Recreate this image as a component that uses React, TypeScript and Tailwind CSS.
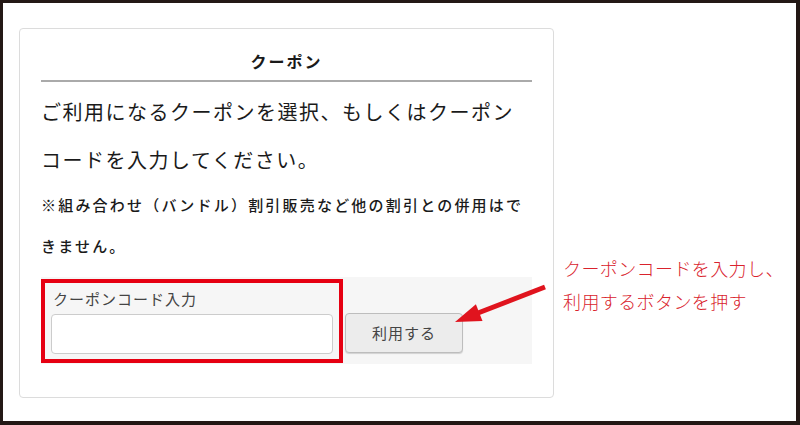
export default function App() {
  return (
    <div
      className="relative w-[800px] h-[425px] bg-white border-t-[3px] border-l-[3px] border-r-4 border-b-4 border-[#231815] flex items-start pl-[16px] pt-[25px] text-[#1a1a1a]"
      style={{ fontFamily: '"Noto Sans CJK JP", "Noto Sans", sans-serif' }}
    >
      {/* クーポン入力カード */}
      <div className="w-[535px] h-[370px] shrink-0 border border-[#dcdcdc] rounded-[4px] px-[21px] pt-[20px]">
        <h2 className="text-center text-[16px] font-bold leading-[24px] tracking-[2px]">クーポン</h2>
        <div className="mt-[7px] h-[2px] bg-[#aaaaaa]" />
        <p className="mt-[6px] text-[20px] leading-[48px] tracking-[1.5px]">
          ご利用になるクーポンを選択、もしくはクーポン
          <br />
          コードを入力してください。
        </p>
        <p className="text-[15px] font-medium leading-[41px] tracking-[2.2px]">
          ※組み合わせ（バンドル）割引販売など他の割引との併用はで
          <br />
          きません。
        </p>

        <div className="mt-[11px] h-[87px] bg-[#f6f6f6] flex items-start pt-[2px]">
          <div className="w-[302px] h-[84px] border-4 border-[#e60012] px-[6px] pt-[6px]">
            <label className="block pl-[2px] text-[15px] leading-[20px] tracking-[1px] text-[#444]">
              クーポンコード入力
            </label>
            <input
              type="text"
              className="mt-[5px] block w-full h-[40px] bg-white border border-[#cccccc] rounded-[4px] outline-none"
            />
          </div>
          <button className="ml-[2px] mt-[34px] w-[118px] h-[40px] bg-[#ececec] border border-[#bdbdbd] rounded-[4px] shadow-[0_1px_1px_rgba(0,0,0,0.15)] text-[15px] tracking-[1px] text-[#444]">
            利用する
          </button>
        </div>
      </div>

      {/* 注釈 */}
      <div className="ml-[9px] mt-[224px] text-[18px] font-light leading-[33px] tracking-[0.4px] text-[#d9232d] whitespace-nowrap">
        クーポンコードを入力し、
        <br />
        利用するボタンを押す
      </div>

      {/* 矢印 */}
      <svg
        className="absolute left-[-3px] top-[-3px] w-[800px] h-[425px] pointer-events-none"
        viewBox="0 0 800 425"
      >
        <line x1="545" y1="287" x2="478" y2="313" stroke="#e0141e" strokeWidth="5" />
        <polygon points="455,322 482.5,321 475.9,304.2" fill="#e0141e" />
      </svg>
    </div>
  );
}
